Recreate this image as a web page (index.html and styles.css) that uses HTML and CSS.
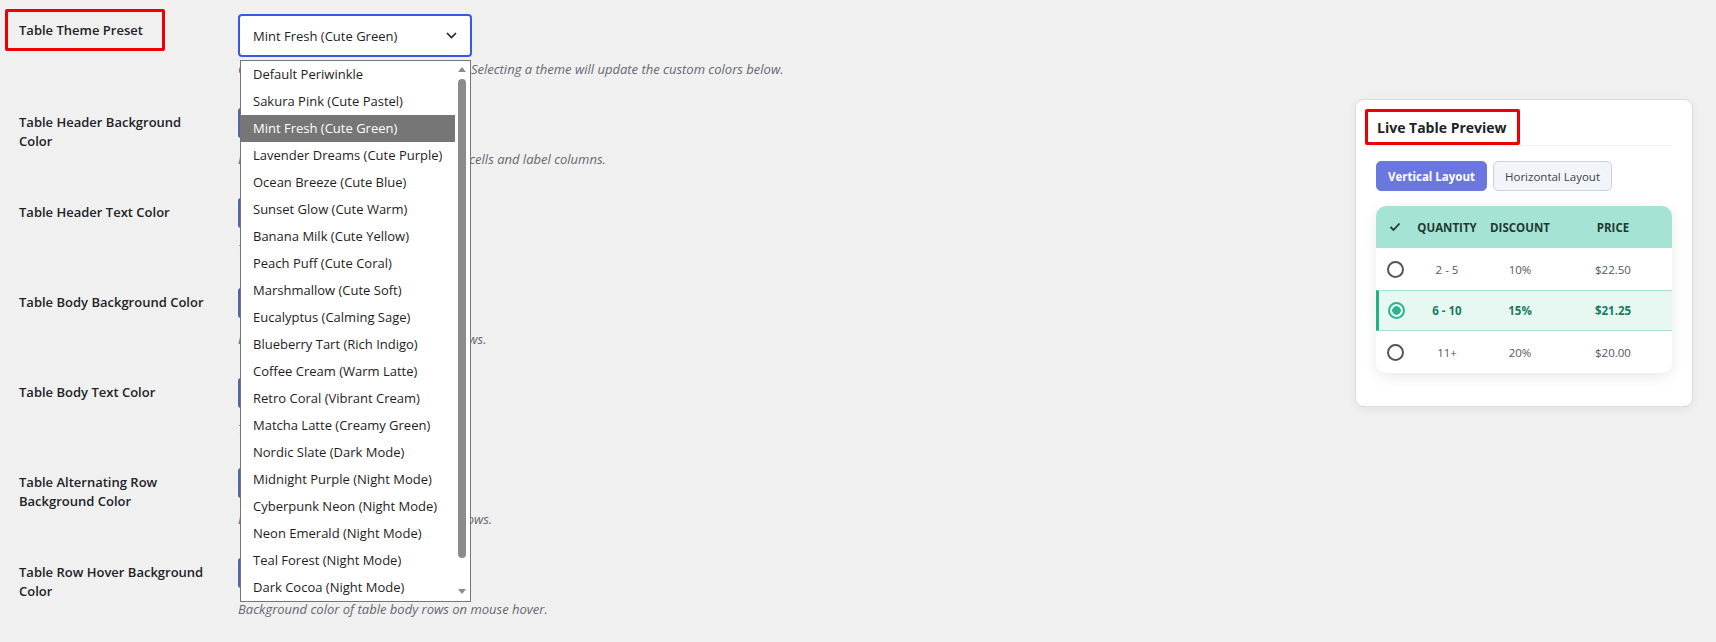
FILE: index.html
```html
<!DOCTYPE html>
<html lang="en">
<head>
<meta charset="utf-8">
<title>Table Theme Settings</title>
<link rel="stylesheet" href="styles.css">
</head>
<body>
<div class="page">
  <div class="form">
    <div class="row row-first">
      <div class="th"><span class="label label-hl">Table Theme Preset</span></div>
      <div class="td">
        <div class="select-wrap">
          <div class="select">
            <span>Mint Fresh (Cute Green)</span>
            <svg class="chev" width="11" height="7" viewBox="0 0 11 7"><polyline points="1,1 5.5,5.5 10,1" fill="none" stroke="#1d2327" stroke-width="1.6"/></svg>
          </div>
          <div class="listbox">
            <ul class="options">
              <li>Default Periwinkle</li>
              <li>Sakura Pink (Cute Pastel)</li>
              <li class="active">Mint Fresh (Cute Green)</li>
              <li>Lavender Dreams (Cute Purple)</li>
              <li>Ocean Breeze (Cute Blue)</li>
              <li>Sunset Glow (Cute Warm)</li>
              <li>Banana Milk (Cute Yellow)</li>
              <li>Peach Puff (Cute Coral)</li>
              <li>Marshmallow (Cute Soft)</li>
              <li>Eucalyptus (Calming Sage)</li>
              <li>Blueberry Tart (Rich Indigo)</li>
              <li>Coffee Cream (Warm Latte)</li>
              <li>Retro Coral (Vibrant Cream)</li>
              <li>Matcha Latte (Creamy Green)</li>
              <li>Nordic Slate (Dark Mode)</li>
              <li>Midnight Purple (Night Mode)</li>
              <li>Cyberpunk Neon (Night Mode)</li>
              <li>Neon Emerald (Night Mode)</li>
              <li>Teal Forest (Night Mode)</li>
              <li>Dark Cocoa (Night Mode)</li>
            </ul>
            <div class="scrollbar">
              <span class="arrow arrow-up"></span>
              <span class="thumb"></span>
              <span class="arrow arrow-down"></span>
            </div>
          </div>
        </div>
        <p class="desc">Choose one preset theme for your table. Selecting a theme will update the custom colors below.</p>
      </div>
    </div>

    <div class="row">
      <div class="th"><span class="label">Table Header Background Color</span></div>
      <div class="td">
        <button class="color-btn" type="button">Select Color</button>
        <p class="desc">Background color used for table header cells and label columns.</p>
      </div>
    </div>

    <div class="row">
      <div class="th"><span class="label">Table Header Text Color</span></div>
      <div class="td">
        <button class="color-btn" type="button">Select Color</button>
        <p class="desc">Text color of header cells.</p>
      </div>
    </div>

    <div class="row">
      <div class="th"><span class="label">Table Body Background Color</span></div>
      <div class="td">
        <button class="color-btn" type="button">Select Color</button>
        <p class="desc">Background colour for the table body rows.</p>
      </div>
    </div>

    <div class="row">
      <div class="th"><span class="label">Table Body Text Color</span></div>
      <div class="td">
        <button class="color-btn" type="button">Select Color</button>
        <p class="desc">Text color of body cells.</p>
      </div>
    </div>

    <div class="row">
      <div class="th"><span class="label">Table Alternating Row Background Color</span></div>
      <div class="td">
        <button class="color-btn" type="button">Select Color</button>
        <p class="desc">Background color for alternating table rows.</p>
      </div>
    </div>

    <div class="row">
      <div class="th"><span class="label">Table Row Hover Background Color</span></div>
      <div class="td">
        <button class="color-btn" type="button">Select Color</button>
        <p class="desc">Background color of table body rows on mouse hover.</p>
      </div>
    </div>
  </div>

  <aside class="preview">
    <div class="card">
      <div class="card-head"><h3 class="card-title">Live Table Preview</h3></div>
      <div class="toggles">
        <button class="tbtn tbtn-on" type="button">Vertical Layout</button>
        <button class="tbtn" type="button">Horizontal Layout</button>
      </div>
      <div class="ptable">
        <div class="prow phead">
          <div class="cell cell-check"><svg width="12" height="10" viewBox="0 0 12 10"><polyline points="1.5,5 4.5,8 10.5,1.5" fill="none" stroke="#1f3a33" stroke-width="1.8"/></svg></div>
          <div class="cell">QUANTITY</div>
          <div class="cell">DISCOUNT</div>
          <div class="cell">PRICE</div>
        </div>
        <div class="prow">
          <div class="cell cell-check"><span class="radio"></span></div>
          <div class="cell">2 - 5</div>
          <div class="cell">10%</div>
          <div class="cell">$22.50</div>
        </div>
        <div class="prow prow-sel">
          <div class="cell cell-check"><span class="radio radio-on"></span></div>
          <div class="cell">6 - 10</div>
          <div class="cell">15%</div>
          <div class="cell">$21.25</div>
        </div>
        <div class="prow">
          <div class="cell cell-check"><span class="radio"></span></div>
          <div class="cell">11+</div>
          <div class="cell">20%</div>
          <div class="cell">$20.00</div>
        </div>
      </div>
    </div>
  </aside>
</div>
</body>
</html>
```

FILE: styles.css
```css
* { box-sizing: border-box; }

html, body {
  margin: 0;
  padding: 0;
  background: #f0f0f1;
}

body {
  font-family: "Open Sans", "Noto Sans", "DejaVu Sans", sans-serif;
  color: #1d2327;
  font-size: 13px;
}

.page {
  display: flex;
  align-items: flex-start;
  padding-left: 19px;
  height: 642px;
  overflow: hidden;
}

.form {
  flex: 1;
}

.row {
  display: grid;
  grid-template-columns: 219px 1fr;
  height: 90px;
}

.row-first {
  height: 93px;
}

.th {
  padding-top: 20px;
  padding-right: 27px;
}

.row-first .th {
  padding-top: 9px;
}

.td {
  padding-top: 15px;
}

.row-first .td {
  padding-top: 14px;
}

.label {
  display: block;
  font-size: 13px;
  font-weight: 600;
  line-height: 19px;
  color: #1d2327;
}

.label-hl {
  display: inline-block;
  margin-left: -14px;
  padding: 8px 19px 8px 11px;
  line-height: 20px;
  border: 3px solid #ee0000;
  border-radius: 2px;
  white-space: nowrap;
}

.select-wrap {
  position: relative;
  width: 234px;
}

.select {
  height: 43px;
  display: flex;
  align-items: center;
  justify-content: space-between;
  padding: 0 13px 0 13px;
  background: #fff;
  border: 2px solid #3858e9;
  border-radius: 4px;
  font-size: 13px;
  color: #1d2327;
}

.chev {
  display: block;
}

.listbox {
  position: absolute;
  top: 46px;
  left: 2px;
  width: 231px;
  height: 542px;
  background: #fff;
  border: 1px solid #767676;
  z-index: 5;
  display: flex;
}

.options {
  list-style: none;
  margin: 0;
  padding: 0;
  flex: 1;
}

.options li {
  height: 27px;
  line-height: 27px;
  padding-left: 12px;
  font-size: 13px;
  color: #1d1d1d;
  white-space: nowrap;
}

.options li.active {
  background: #767676;
  color: #fff;
}

.scrollbar {
  position: relative;
  width: 15px;
  flex: none;
  background: #fff;
}

.thumb {
  position: absolute;
  top: 18px;
  left: 3px;
  width: 8px;
  height: 479px;
  background: #8b8b8b;
  border-radius: 4px;
}

.arrow {
  position: absolute;
  left: 3px;
  width: 0;
  height: 0;
  border-left: 4px solid transparent;
  border-right: 4px solid transparent;
}

.arrow-up {
  top: 6px;
  border-bottom: 5px solid #8b8b8b;
}

.arrow-down {
  bottom: 7px;
  border-top: 5px solid #8b8b8b;
}

.desc {
  margin: 2px 0 0;
  font-size: 13px;
  line-height: 20px;
  font-style: italic;
  color: #646970;
  white-space: nowrap;
}

.color-btn {
  display: block;
  width: 120px;
  height: 30px;
  margin: 0 0 11px;
  padding: 0 10px;
  background: #f6f7f7;
  border: 2px solid #5064a8;
  border-radius: 3px;
  font: inherit;
  font-size: 13px;
  color: #2271b1;
}

.color-btn + .desc {
  margin-top: 0;
}

/* preview */

.preview {
  flex: none;
  width: 338px;
  margin-top: 99px;
  margin-right: 23px;
}

.card {
  background: #fff;
  border: 1px solid #dcdcde;
  border-radius: 9px;
  box-shadow: 0 2px 10px rgba(0, 0, 0, 0.06);
  padding: 9px 20px 31px;
  height: 308px;
}

.card-head {
  margin-left: -11px;
  border-bottom: 1px solid #f0f0f1;
  margin-bottom: 15px;
}

.card-title {
  display: inline-block;
  margin: 0;
  padding: 4px 10px 3px 9px;
  border: 3px solid #ee0000;
  border-radius: 2px;
  font-size: 14px;
  font-weight: 700;
  line-height: 23px;
  color: #1d2327;
}

.toggles {
  display: flex;
  gap: 6px;
  margin-bottom: 15px;
}

.tbtn {
  height: 30px;
  padding: 0 11px;
  border-radius: 5px;
  font: inherit;
  font-size: 11.5px;
  border: 1px solid #cdd3dc;
  background: #f1f4f8;
  color: #3c434a;
  font-weight: 500;
}

.tbtn-on {
  background: #6a77de;
  border-color: #6a77de;
  color: #fff;
  font-weight: 700;
}

.ptable {
  border-radius: 10px;
  overflow: hidden;
  background: #fff;
  box-shadow: 0 4px 14px rgba(0, 0, 0, 0.09);
}

.prow {
  display: grid;
  grid-template-columns: 40px 62px 84px 1fr;
  padding-right: 8px;
  height: 42px;
  align-items: center;
  font-size: 11.5px;
  color: #50575e;
  text-align: center;
}

.phead {
  background: #a5e4d4;
  color: #1f3a33;
  font-weight: 700;
}

.prow-sel {
  background: #e7f8f2;
  border-top: 1px solid #a5e2d2;
  border-bottom: 1px solid #a5e2d2;
  border-left: 3px solid #22b089;
  color: #1a7b61;
  font-weight: 700;
  height: 41px;
  grid-template-columns: 37px 62px 84px 1fr;
}

.cell-check {
  display: flex;
  justify-content: center;
  align-items: center;
  padding-right: 2px;
}

.radio {
  width: 17px;
  height: 17px;
  border: 2px solid #555;
  border-radius: 50%;
  display: block;
}

.radio-on {
  border-color: #2bb593;
  background: radial-gradient(circle, #2bb593 0 4px, transparent 4.5px);
}
```
